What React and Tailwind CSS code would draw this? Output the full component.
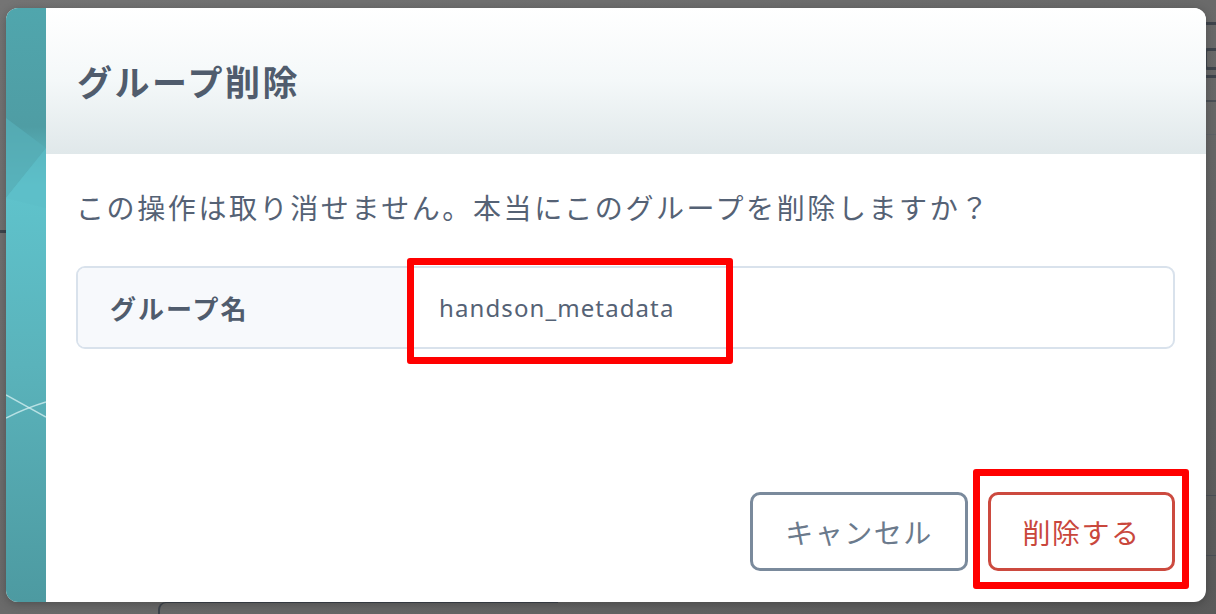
import React from "react";

const jp = { fontFamily: '"Noto Sans CJK JP", "Noto Sans", sans-serif' };

function SideStrip() {
  return (
    <svg width="40" height="594" viewBox="0 0 40 594" className="block h-full w-[40px] shrink-0">
      <defs>
        <linearGradient id="stripBg" x1="0" y1="0" x2="0" y2="1">
          <stop offset="0" stopColor="#50a6ad" />
          <stop offset="0.2" stopColor="#4f9da4" />
          <stop offset="0.3" stopColor="#5fc3cc" />
          <stop offset="0.6" stopColor="#5ab3bb" />
          <stop offset="1" stopColor="#4d9aa1" />
        </linearGradient>
      </defs>
      <rect width="40" height="594" fill="url(#stripBg)" />
      <polygon points="0,110 40,140 0,190" fill="#56aeb6" opacity="0.8" />
      <polygon points="40,140 0,190 40,200" fill="#5dbec7" opacity="0.7" />
      <path d="M0 387 L40 409" stroke="#d8f1f3" strokeWidth="1.5" opacity="0.75" fill="none" />
      <path d="M0 410 Q20 400 40 394" stroke="#d8f1f3" strokeWidth="1.5" opacity="0.75" fill="none" />
    </svg>
  );
}

export default function App() {
  return (
    <div className="relative w-[1216px] h-[614px] overflow-hidden bg-gradient-to-br from-[#747474] via-[#6a6a6a] to-[#5a5a5a]" style={jp}>
      {/* page behind the overlay */}
      <div className="absolute right-0 top-[22px] w-[20px] h-[3px] bg-[#3e444c]" />
      <div className="absolute right-[-6px] top-[48px] w-[18px] h-[22px] rounded border-[3px] border-[#3e444c]" />
      <div className="absolute right-0 top-[75px] w-[20px] h-[3px] bg-[#3e444c]" />
      <div className="absolute right-0 top-[100px] w-[20px] h-[2px] bg-[#4a4f56]" />
      <div className="absolute right-0 top-[134px] w-[20px] h-px bg-[#5e6166]" />
      <div className="absolute left-0 top-[230px] w-[10px] h-[3px] bg-[#3e444c]" />
      <div className="absolute left-[158px] top-[602px] w-[400px] h-[20px] rounded-tl-[8px] border-l-2 border-t border-[#3e444c]" />
      <div className="absolute right-0 top-[495px] w-[20px] h-px bg-[#4a4f56]" />
      <div className="absolute right-0 top-[555px] w-[20px] h-px bg-[#4a4f56]" />

      <div className="absolute inset-0 pt-[8px] pl-[6px]">
        <div className="flex w-[1200px] h-[594px] rounded-[12px] overflow-hidden bg-white shadow-[0_2px_10px_rgba(0,0,0,0.25)]">
          <SideStrip />
          <div className="flex flex-1 flex-col">
            <div className="flex h-[146px] items-center pl-[31px] bg-gradient-to-b from-white via-[#f4f8f9] to-[#e0e8ea]">
              <h1 className="text-[35px] font-bold tracking-[2.5px] text-[#505c6d]">グループ削除</h1>
            </div>
            <div className="flex flex-1 flex-col pl-[30px] pr-[31px] pt-[33px] pb-[31px]">
              <p className="text-[28px] leading-[40px] tracking-[2.6px] text-[#556275]">
                この操作は取り消せません。本当にこのグループを削除しますか？
              </p>
              <div className="mt-[39px] flex h-[83px] rounded-[9px] border-2 border-[#d9e2ec]">
                <div className="flex w-[330px] items-center rounded-l-[7px] bg-[#f7f9fc] pl-[32px]">
                  <span className="text-[26px] font-bold tracking-[2px] text-[#505c6d]">グループ名</span>
                </div>
                <div className="relative flex flex-1 items-center pl-[31px]">
                  <span className="text-[24px] tracking-[1.1px] text-[#556275]" style={{ fontFamily: '"Noto Sans", "Noto Sans CJK JP", sans-serif' }}>
                    handson_metadata
                  </span>
                  <div className="absolute left-[-1px] top-[-10px] w-[326px] h-[106px] rounded-[3px] border-[7px] border-[#ff0000]" />
                </div>
              </div>
              <div className="mt-auto flex justify-end gap-[20px]">
                <button className="flex h-[79px] w-[218px] items-center justify-center rounded-[10px] border-[3px] border-[#7a8a9c] bg-white text-[28px] tracking-[1.5px] text-[#6b7a8c]">
                  キャンセル
                </button>
                <div className="relative">
                  <button className="flex h-[79px] w-[187px] items-center justify-center rounded-[10px] border-[3px] border-[#cc4a3f] bg-white text-[28px] tracking-[1.5px] text-[#c9473c]">
                    削除する
                  </button>
                  <div className="absolute left-[-15px] top-[-23px] w-[216px] h-[120px] rounded-[3px] border-[7px] border-[#ff0000]" />
                </div>
              </div>
            </div>
          </div>
        </div>
      </div>
    </div>
  );
}
